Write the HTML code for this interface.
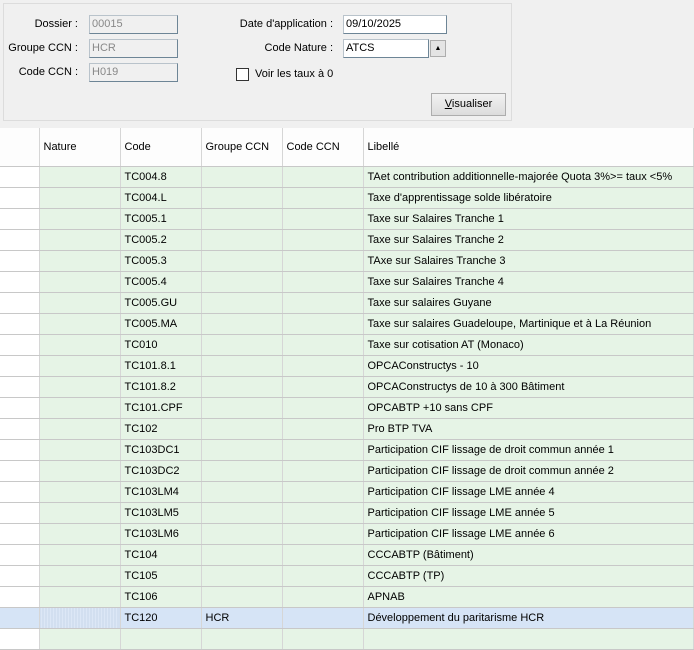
<!DOCTYPE html>
<html><head><meta charset="utf-8"><style>
*{margin:0;padding:0;box-sizing:border-box}
body{width:694px;height:631px;overflow:hidden;background:#f0f0f0;font-family:"Liberation Sans","DejaVu Sans",sans-serif;font-size:11px;color:#000;position:relative}
.panel{position:absolute;left:3px;top:3px;width:509px;height:118px;border:1px solid #dcdcdc;background:#f0f0f0}
.lbl{position:absolute;text-align:right;white-space:nowrap}
.inp{position:absolute;height:19px;border:1px solid #b9c3cb;border-bottom-color:#6d8596;border-right-color:#6d8596;padding:2px 0 0 2px;background:#f0f0f0;color:#888}
.inp.w{background:#fff;color:#000}
.btn{position:absolute;left:431px;top:93px;width:75px;height:23px;border:1px solid #adadad;background:linear-gradient(#f2f2f2,#dcdcdc);text-align:center;line-height:21px}
.grid{position:absolute;left:0;top:128px;width:694px;height:503px;background:#fff}
table{border-collapse:collapse;table-layout:fixed;width:694px}
td{height:21px;border-right:1px solid #d6d6d6;border-bottom:1px solid #c8c8c8;padding:0 0 0 4px;white-space:nowrap;overflow:hidden;background:#e6f4e6}
td:first-child{background:#fff}
th{height:38px;text-align:left;font-weight:bold;font-weight:normal;padding:0 0 0 4px;border-right:1px solid #d6d6d6;border-bottom:1px solid #c8c8c8;background:#fdfdfd;font-size:11px}
tr.sel td{background:#d6e4f6}
tr.sel td:nth-child(2){background:repeating-linear-gradient(90deg,#c9d7ea 0 1px,#dce7f6 1px 3px)}
</style></head><body>
<div class="panel"></div>
<div class="lbl" style="left:20px;top:18px;width:58px">Dossier :</div>
<div class="inp" style="left:89px;top:15px;width:89px">00015</div>
<div class="lbl" style="left:4px;top:42px;width:74px">Groupe CCN :</div>
<div class="inp" style="left:89px;top:39px;width:89px">HCR</div>
<div class="lbl" style="left:14px;top:66px;width:64px">Code CCN :</div>
<div class="inp" style="left:89px;top:63px;width:89px">H019</div>
<div class="lbl" style="left:220px;top:18px;width:113px">Date d'application :</div>
<div class="inp w" style="left:343px;top:15px;width:104px">09/10/2025</div>
<div class="lbl" style="left:240px;top:42px;width:93px">Code Nature :</div>
<div class="inp w" style="left:343px;top:39px;width:86px">ATCS</div>
<div style="position:absolute;left:430px;top:40px;width:16px;height:17px;border:1px solid #adadad;background:#e4e4e4;font-size:7px;text-align:center;line-height:15px">▲</div>
<div style="position:absolute;left:236px;top:68px;width:13px;height:13px;border:1px solid #333;background:#fff"></div>
<div class="lbl" style="left:255px;top:68px">Voir les taux à 0</div>
<div class="btn"><u>V</u>isualiser</div>
<div class="grid"><table>
<colgroup><col style="width:39px"><col style="width:81px"><col style="width:81px"><col style="width:81px"><col style="width:81px"><col></colgroup>
<tr><th></th><th>Nature</th><th>Code</th><th>Groupe CCN</th><th>Code CCN</th><th>Libellé</th></tr>
<tr><td></td><td></td><td>TC004.8</td><td></td><td></td><td>TAet contribution additionnelle-majorée Quota 3%&gt;= taux &lt;5%</td></tr>
<tr><td></td><td></td><td>TC004.L</td><td></td><td></td><td>Taxe d'apprentissage solde libératoire</td></tr>
<tr><td></td><td></td><td>TC005.1</td><td></td><td></td><td>Taxe sur Salaires Tranche 1</td></tr>
<tr><td></td><td></td><td>TC005.2</td><td></td><td></td><td>Taxe sur Salaires Tranche 2</td></tr>
<tr><td></td><td></td><td>TC005.3</td><td></td><td></td><td>TAxe sur Salaires Tranche 3</td></tr>
<tr><td></td><td></td><td>TC005.4</td><td></td><td></td><td>Taxe sur Salaires Tranche 4</td></tr>
<tr><td></td><td></td><td>TC005.GU</td><td></td><td></td><td>Taxe sur salaires Guyane</td></tr>
<tr><td></td><td></td><td>TC005.MA</td><td></td><td></td><td>Taxe sur salaires Guadeloupe, Martinique et à La Réunion</td></tr>
<tr><td></td><td></td><td>TC010</td><td></td><td></td><td>Taxe sur cotisation AT (Monaco)</td></tr>
<tr><td></td><td></td><td>TC101.8.1</td><td></td><td></td><td>OPCAConstructys - 10</td></tr>
<tr><td></td><td></td><td>TC101.8.2</td><td></td><td></td><td>OPCAConstructys de 10 à 300 Bâtiment</td></tr>
<tr><td></td><td></td><td>TC101.CPF</td><td></td><td></td><td>OPCABTP +10 sans CPF</td></tr>
<tr><td></td><td></td><td>TC102</td><td></td><td></td><td>Pro BTP TVA</td></tr>
<tr><td></td><td></td><td>TC103DC1</td><td></td><td></td><td>Participation CIF lissage de droit commun année 1</td></tr>
<tr><td></td><td></td><td>TC103DC2</td><td></td><td></td><td>Participation CIF lissage de droit commun année 2</td></tr>
<tr><td></td><td></td><td>TC103LM4</td><td></td><td></td><td>Participation CIF lissage LME année 4</td></tr>
<tr><td></td><td></td><td>TC103LM5</td><td></td><td></td><td>Participation CIF lissage LME année 5</td></tr>
<tr><td></td><td></td><td>TC103LM6</td><td></td><td></td><td>Participation CIF lissage LME année 6</td></tr>
<tr><td></td><td></td><td>TC104</td><td></td><td></td><td>CCCABTP (Bâtiment)</td></tr>
<tr><td></td><td></td><td>TC105</td><td></td><td></td><td>CCCABTP (TP)</td></tr>
<tr><td></td><td></td><td>TC106</td><td></td><td></td><td>APNAB</td></tr>
<tr class="sel"><td></td><td></td><td>TC120</td><td>HCR</td><td></td><td>Développement du paritarisme HCR</td></tr>
<tr><td></td><td></td><td></td><td></td><td></td><td></td></tr>
</table></div>
</body></html>
